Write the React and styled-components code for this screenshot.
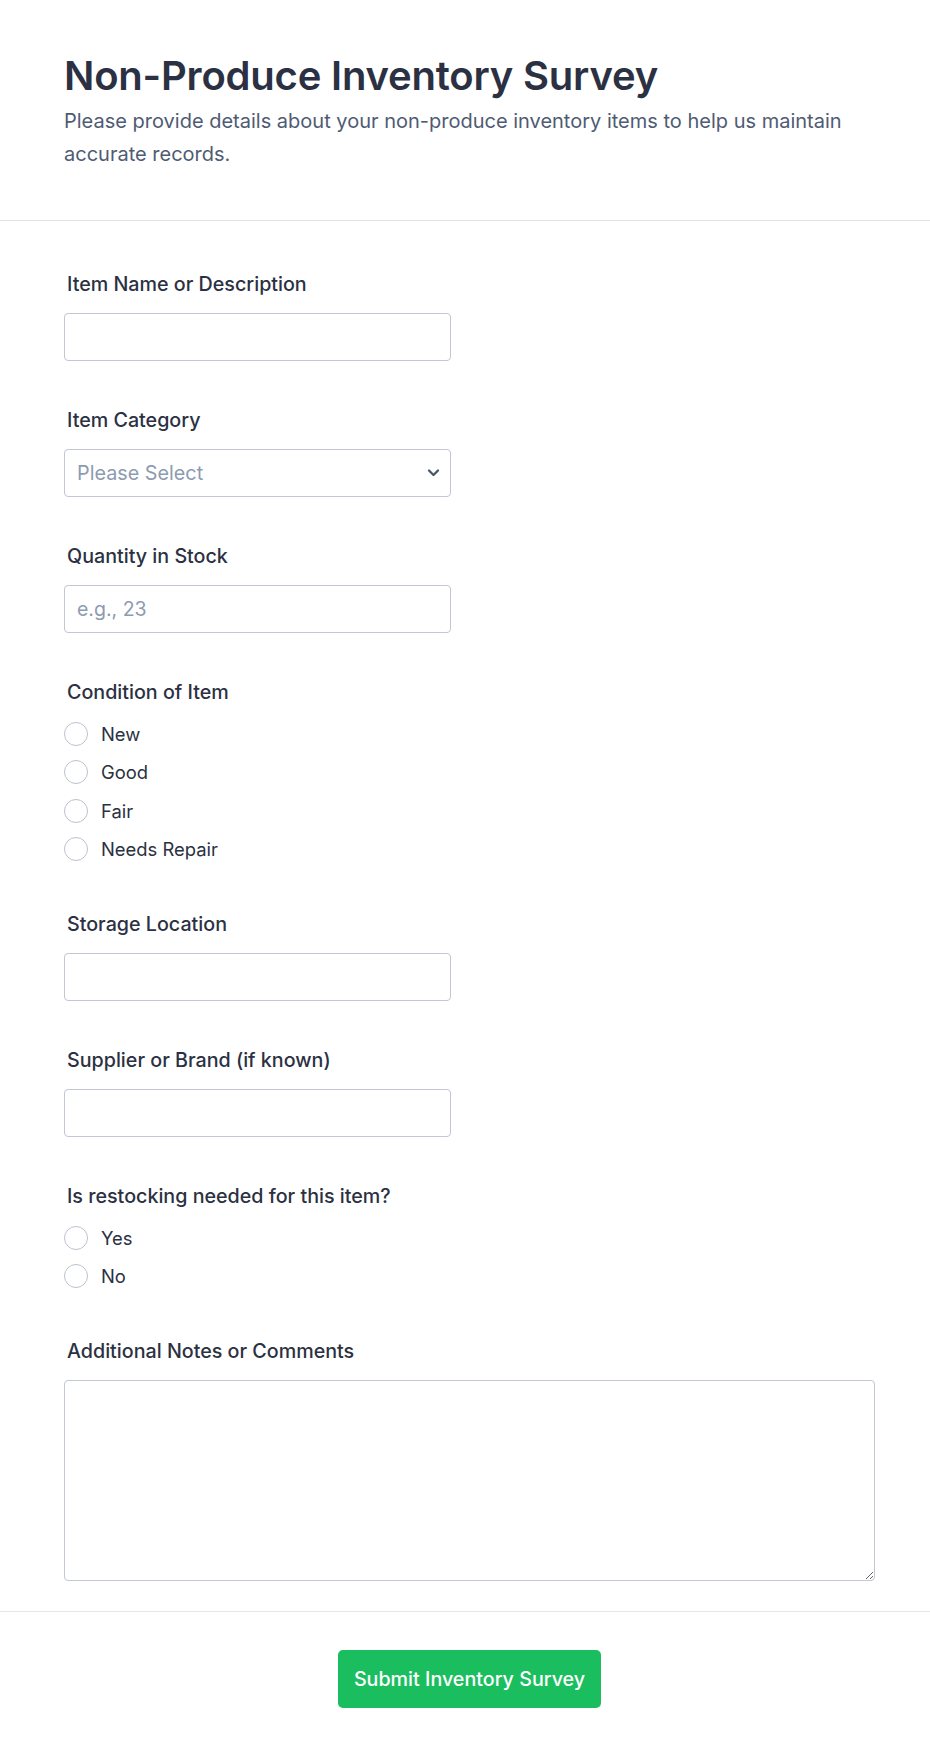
import React from 'react'
import styled, { createGlobalStyle } from 'styled-components'

const GlobalStyle = createGlobalStyle`
  * {
    box-sizing: border-box;
  }
  body {
    margin: 0;
    background: #fff;
    font-family: Inter, "Noto Sans", "Liberation Sans", sans-serif;
    color: #2b3142;
  }
`

const Page = styled.div`
  width: 930px;
  min-height: 1760px;
  background: #fff;
`

const Header = styled.header`
  padding: 52px 55px 49px 64px;
  border-bottom: 1px solid #e1e1ea;
`

const Title = styled.h1`
  margin: 0;
  font-size: 40px;
  line-height: 48px;
  font-weight: 600;
  color: #2b3142;
  letter-spacing: -0.2px;
`

const Subtitle = styled.p`
  margin: 5px 0 0;
  font-size: 20px;
  line-height: 33px;
  color: #4f5b73;
`

const Form = styled.form`
  padding: 50px 55px 30px 64px;
  border-bottom: 1px solid #e6e6ee;
`

const Field = styled.div`
  display: flex;
  flex-direction: column;
  margin-bottom: ${p => (p.$last ? '0' : p.$radio ? '49.5px' : '46px')};
`

const Label = styled.label`
  display: block;
  font-size: 19.7px;
  line-height: 26px;
  font-weight: 500;
  color: #2b3142;
  margin: 0 0 16px 3px;
`

const TextInput = styled.input`
  width: 387px;
  height: 48px;
  padding: 0 12px;
  border: 1px solid #c3c6d4;
  border-radius: 4px;
  font-family: inherit;
  font-size: 19.5px;
  color: #2b3142;
  background: #fff;
  outline: none;

  &::placeholder {
    color: #8d9bb1;
  }
`

const SelectWrap = styled.div`
  position: relative;
  width: 387px;
`

const Select = styled.select`
  width: 100%;
  height: 48px;
  padding: 0 36px 0 12px;
  border: 1px solid #c3c6d4;
  border-radius: 4px;
  font-family: inherit;
  font-size: 19.8px;
  color: #8d9bb1;
  background: #fff;
  appearance: none;
  outline: none;
`

const Chevron = styled.svg`
  position: absolute;
  right: 11px;
  top: 50%;
  transform: translateY(-50%);
  pointer-events: none;
`

const Options = styled.div`
  display: flex;
  flex-direction: column;
  gap: 14.4px;
  padding-top: 1px;
`

const Option = styled.label`
  display: flex;
  align-items: center;
  gap: 13px;
  font-size: 18.4px;
  line-height: 24px;
  color: #2b3142;
`

const Radio = styled.input.attrs({ type: 'radio' })`
  appearance: none;
  margin: 0;
  width: 24px;
  height: 24px;
  border: 1px solid #bdc1ce;
  border-radius: 50%;
  background: #fff;
`

const TextArea = styled.textarea`
  width: 811px;
  height: 201px;
  padding: 10px 12px;
  border: 1px solid #c3c6d4;
  border-radius: 4px;
  font-family: inherit;
  font-size: 18px;
  outline: none;
  display: block;
`

const Footer = styled.div`
  display: flex;
  justify-content: center;
  padding: 38px 55px 50px 64px;
`

const SubmitButton = styled.button`
  height: 58px;
  padding: 0 16px;
  border: none;
  border-radius: 5px;
  background: #1bbe5f;
  color: #fff;
  font-family: inherit;
  font-size: 19.7px;
  font-weight: 500;
  cursor: pointer;
`

const RadioField = ({ label, name, options }) => (
  <Field $radio>
    <Label as="div">{label}</Label>
    <Options>
      {options.map(o => (
        <Option key={o}>
          <Radio name={name} value={o} />
          {o}
        </Option>
      ))}
    </Options>
  </Field>
)

export default function App() {
  return (
    <Page>
      <GlobalStyle />
      <Header>
        <Title>Non-Produce Inventory Survey</Title>
        <Subtitle>
          Please provide details about your non-produce inventory items to help us maintain
          accurate records.
        </Subtitle>
      </Header>
      <Form onSubmit={e => e.preventDefault()}>
        <Field>
          <Label htmlFor="item">Item Name or Description</Label>
          <TextInput id="item" />
        </Field>
        <Field>
          <Label htmlFor="category">Item Category</Label>
          <SelectWrap>
            <Select id="category" defaultValue="">
              <option value="" disabled>
                Please Select
              </option>
              <option>Packaging</option>
              <option>Cleaning Supplies</option>
              <option>Equipment</option>
              <option>Other</option>
            </Select>
            <Chevron width="13" height="9" viewBox="0 0 13 9" aria-hidden="true">
              <path
                d="M2 2l4.5 4.5L11 2"
                fill="none"
                stroke="#4a5568"
                strokeWidth="2.3"
                strokeLinecap="round"
                strokeLinejoin="round"
              />
            </Chevron>
          </SelectWrap>
        </Field>
        <Field>
          <Label htmlFor="qty">Quantity in Stock</Label>
          <TextInput id="qty" placeholder="e.g., 23" />
        </Field>
        <RadioField
          label="Condition of Item"
          name="condition"
          options={['New', 'Good', 'Fair', 'Needs Repair']}
        />
        <Field>
          <Label htmlFor="location">Storage Location</Label>
          <TextInput id="location" />
        </Field>
        <Field>
          <Label htmlFor="supplier">Supplier or Brand (if known)</Label>
          <TextInput id="supplier" />
        </Field>
        <RadioField label="Is restocking needed for this item?" name="restock" options={['Yes', 'No']} />
        <Field $last>
          <Label htmlFor="notes">Additional Notes or Comments</Label>
          <TextArea id="notes" />
        </Field>
      </Form>
      <Footer>
        <SubmitButton type="submit">Submit Inventory Survey</SubmitButton>
      </Footer>
    </Page>
  )
}
